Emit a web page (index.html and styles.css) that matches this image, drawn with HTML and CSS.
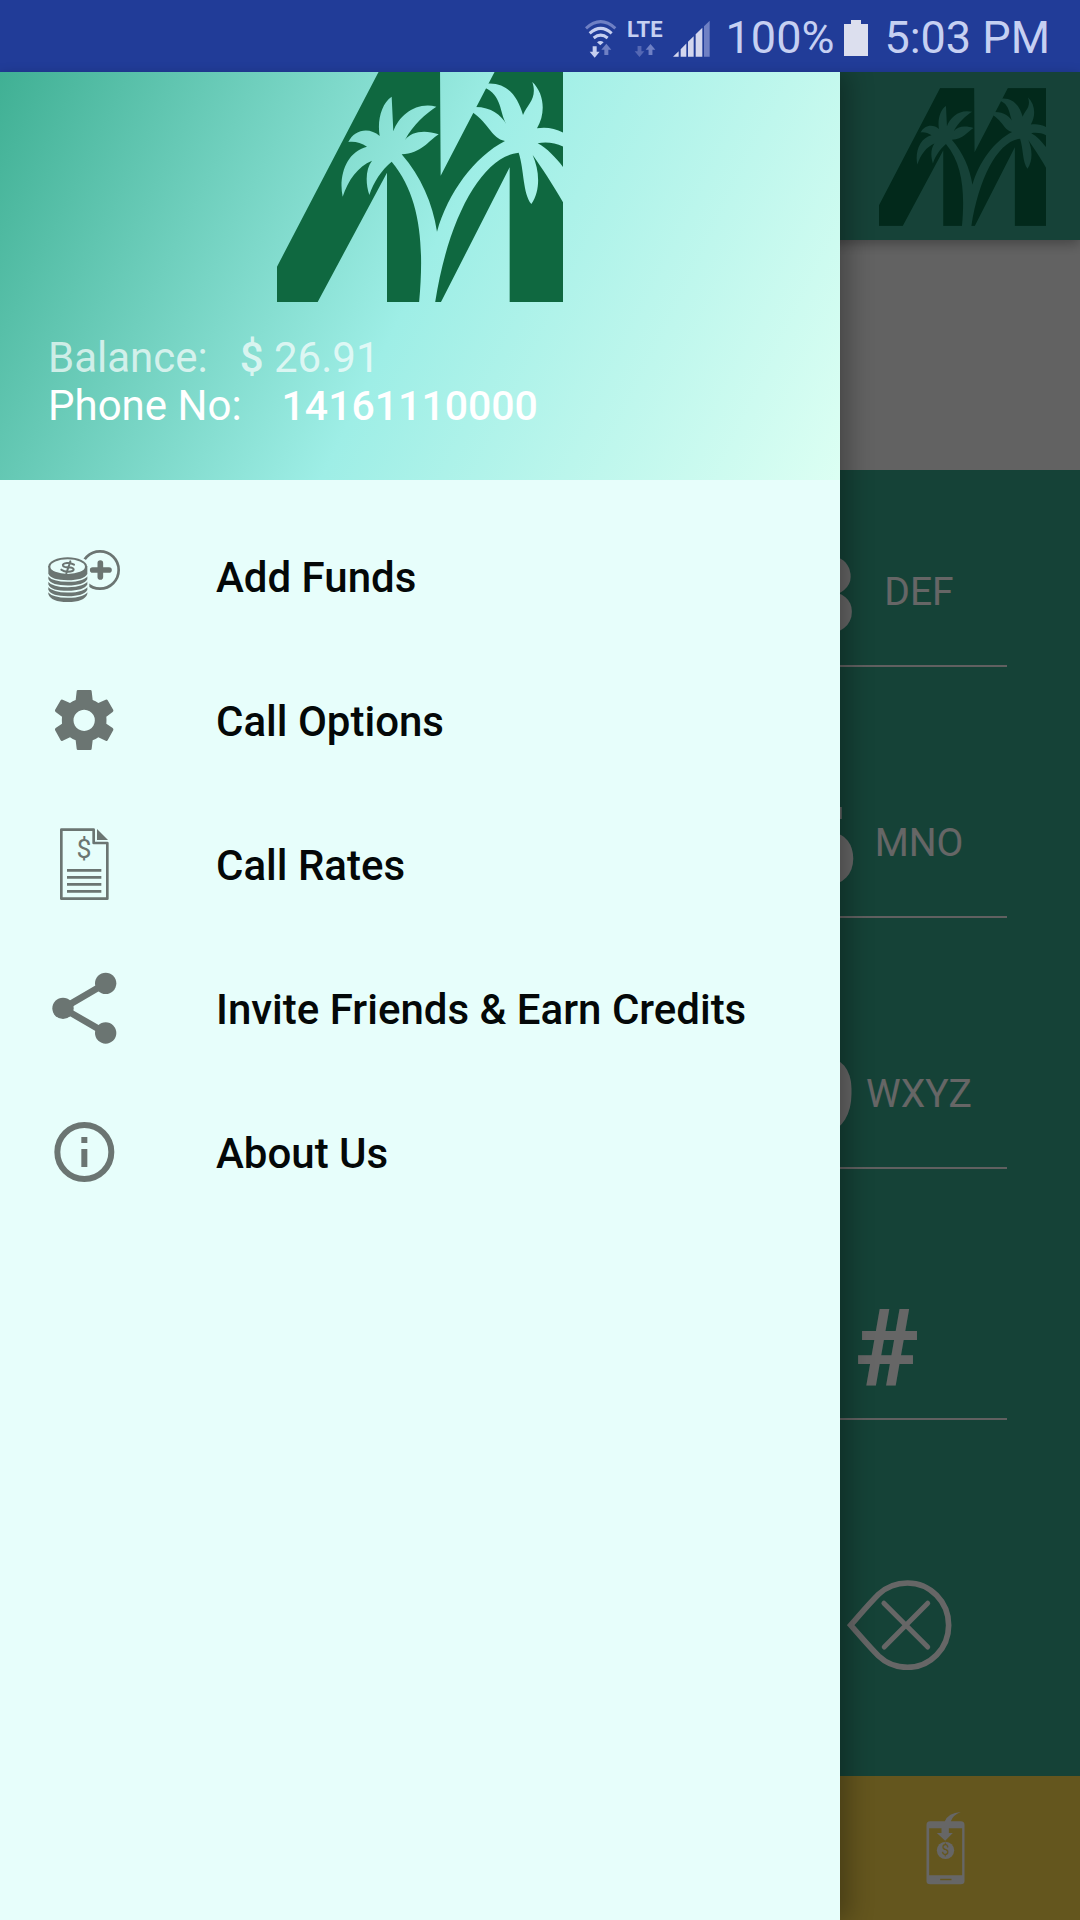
FILE: index.html
```html
<!DOCTYPE html>
<html lang="en">
<head>
<meta charset="utf-8">
<meta name="viewport" content="width=device-width, initial-scale=1">
<title>Dialer</title>
<link rel="stylesheet" href="styles.css">
</head>
<body>
<svg class="defs" aria-hidden="true">
  <defs>
    <mask id="palms" maskUnits="userSpaceOnUse" x="48" y="18" width="858" height="708">
      <rect x="48" y="18" width="858" height="708" fill="#fff"/>
      <path fill="#000" d="M474,730 C490,560 480,410 392,305 C362,330 338,365 325,405 C312,365 315,325 333,302 C290,320 262,360 245,410 C232,350 255,275 318,260 C300,248 280,243 262,246 C280,208 325,200 356,228 C348,180 362,130 392,110 L397,214 C415,165 465,125 526,140 C495,160 455,195 432,240 C450,215 490,208 533,223 C505,240 480,282 422,283 C480,350 515,430 528,515 C560,400 640,290 732,243 C690,235 690,195 630,154 L640,141 C690,140 720,165 736,192 C715,160 725,105 668,82 L680,71 C740,68 770,110 786,165 C800,130 830,115 814,66 C850,100 855,160 828,205 C855,200 885,205 910,220 L910,262 C885,248 855,245 830,250 C860,265 890,300 910,326 L910,434 C880,380 840,320 815,285 C835,330 840,390 811,432 C785,400 790,330 773,278 C660,290 560,480 522,730 Z"/>
    </mask>
    <symbol id="logo" viewBox="48 18 858 708">
      <path mask="url(#palms)" d="M362,18 H537 L539,347 L710,18 H906 V726 H746 V322 L540,726 H378 V338 L170,726 H48 V620 Z"/>
    </symbol>
  </defs>
</svg>

<header class="status">
  <svg class="status-wifi" viewBox="72 48 96 117" aria-label="Wi-Fi">
    <g fill="none" stroke="#c6cff0" stroke-width="9">
      <path stroke="#6f80c4" d="M75,76 Q119,36 163,76"/>
      <path d="M86,91 Q119,61 152,91"/>
      <path d="M98,105 Q119,88 140,105"/>
    </g>
    <path fill="#c6cff0" d="M108,118 Q118,110 128,118 L118,127 Z M95,130 h12 v16 h9 l-15,18 l-15,-18 h9 Z"/>
    <path fill="#6f80c4" d="M130,156 h12 v-16 h9 l-15,-18 l-15,18 h9 Z"/>
  </svg>
  <div class="status-lte">
    <span>LTE</span>
    <svg viewBox="226 122 68 40" aria-hidden="true">
      <path fill="#5568b4" d="M237,128 h12 v16 h9 l-15,18 l-15,-18 h9 Z"/>
      <path fill="#6f80c4" d="M271,156 h12 v-16 h9 l-15,-18 l-15,18 h9 Z"/>
    </svg>
  </div>
  <svg class="status-signal" viewBox="345 52 111 110" aria-label="Signal">
    <path fill="#d3d6ee" d="M345,162 L362,145 V162 Z M368,139 L385,122 V162 H368 Z M390,117 L407,100 V162 H390 Z M413,94 L433,75 V162 H413 Z"/>
    <path fill="#6f80c4" d="M438,70 L455,54 V162 H438 Z"/>
  </svg>
  <span class="status-text">100%</span>
  <svg class="status-battery" viewBox="0 0 24 36" aria-label="Battery full"><path fill="#dcdfee" d="M7,0 h10 v4 h7 v32 h-24 v-32 h7 Z"/></svg>
  <span class="status-text">5:03 PM</span>
</header>

<div class="app">
  <main class="dialer">
    <div class="toolbar"><svg class="toolbar-logo" role="img" aria-label="Logo"><use href="#logo"/></svg></div>
    <div class="display"></div>
    <ul class="keypad">
      <li><button class="key"><span class="digit">3</span><span class="letters">DEF</span></button></li>
      <li><button class="key"><span class="digit">6</span><span class="letters">MNO</span></button></li>
      <li><button class="key"><span class="digit">9</span><span class="letters">WXYZ</span></button></li>
      <li><button class="key key-hash"><span class="digit">#</span></button></li>
      <li class="erase">
        <button class="key" aria-label="Backspace">
          <svg viewBox="84 121 314 271" fill="none" stroke="#fff">
            <path stroke-width="17" d="M94,257 C130,216 150,192 178,164 Q214,130 265,130 A124,127 0 0 1 265,384 Q214,384 178,350 C150,322 130,298 94,257 Z"/>
            <path stroke-width="15" stroke-linecap="round" d="M194,191 L326,323 M326,191 L195,323"/>
          </svg>
        </button>
      </li>
    </ul>
    <nav class="tabs">
      <button class="tab" aria-label="Top up">
        <svg viewBox="316 812 116 222">
          <path fill="#fff" fill-rule="evenodd" d="M328,843 H372 Q382,818 420,815 Q396,824 390,843 H420 Q431,843 431,854 V1022 Q431,1032 420,1032 H328 Q317,1032 317,1022 V854 Q317,843 328,843 Z M325,864 V1005 H424 V864 H384 V878 H396 L373,901 L348,878 H362 V864 Z M358,1015 V1020 H392 V1015 Z"/>
          <circle cx="374" cy="930" r="26" fill="#fff"/>
          <text class="coin-sign" x="374" y="945" text-anchor="middle">$</text>
        </svg>
      </button>
    </nav>
  </main>

  <div class="scrim"></div>

  <aside class="drawer">
    <div class="account">
      <svg class="account-logo" role="img" aria-label="Logo"><use href="#logo"/></svg>
      <dl class="facts">
        <div class="fact fact-balance"><dt>Balance:</dt><dd><b>$</b> 26.91</dd></div>
        <div class="fact"><dt>Phone No:</dt><dd class="phone">14161110000</dd></div>
      </dl>
    </div>
    <nav class="menu">
      <a class="item" href="#funds">
        <svg class="item-icon" viewBox="83 30 216 216">
          <circle cx="239" cy="120" r="56" fill="none" stroke="#6b7572" stroke-width="8"/>
          <path stroke="#6b7572" stroke-width="17" stroke-linecap="round" d="M217,120 H266 M240,99 V141"/>
          <path fill="#e7fefb" d="M78,106 Q85,78 142,76 Q200,78 207,106 V200 Q190,222 142,222 Q90,222 78,200 Z"/>
          <path fill="#6b7572" d="M84,108 V192 Q92,216 142,216 Q192,216 201,192 V108 Z"/>
          <ellipse cx="142" cy="109" rx="58" ry="27" fill="#6b7572"/>
          <ellipse cx="142" cy="110" rx="52" ry="22" fill="#e7fefb"/>
          <g fill="none" stroke="#e7fefb" stroke-width="5">
            <path d="M82,133 Q92,153 142,153 Q192,153 203,133"/>
            <path d="M82,149 Q92,169 142,169 Q192,169 203,149"/>
            <path d="M82,165 Q92,185 142,185 Q192,185 203,165"/>
            <path d="M82,181 Q92,201 142,201 Q192,201 203,181"/>
          </g>
          <path fill="none" stroke="#6b7572" stroke-width="6" stroke-linecap="round" d="M161,104 Q152,98 140,99 Q125,101 128,107 Q131,112 144,112 Q160,113 160,119 Q158,125 144,125 Q130,125 123,119 M150,94 L138,130"/>
        </svg>
        <span>Add Funds</span>
      </a>
      <a class="item" href="#options">
        <svg class="item-icon" viewBox="83 462 216 216">
          <path fill="#6b7572" fill-rule="evenodd" d="M173,480 H210 Q214,480 214,484 L217,510 Q226,513 234,519 L256,509 Q260,507 262,511 L279,540 Q280,543 277,546 L258,560 Q259,570 258,581 L277,594 Q280,597 279,600 L262,631 Q260,634 256,632 L234,622 Q226,628 217,631 L214,656 Q214,660 210,660 H173 Q169,660 169,656 L166,631 Q157,628 149,622 L127,632 Q123,634 121,631 L104,600 Q103,597 106,594 L125,581 Q124,570 125,560 L106,546 Q103,543 104,540 L121,511 Q123,507 127,509 L149,519 Q157,513 166,510 L169,484 Q169,480 173,480 Z M191,539 a32,32 0 1 0 1,0 Z"/>
        </svg>
        <span>Call Options</span>
      </a>
      <a class="item" href="#rates">
        <svg class="item-icon" viewBox="83 84 216 216">
          <path fill="none" stroke="#6b7572" stroke-width="8" stroke-linejoin="round" d="M220,89 H123 V296 H261 V129 H220 Z"/>
          <path fill="#6b7572" d="M230,87 L263,120 H230 Z"/>
          <path stroke="#6b7572" stroke-width="8" d="M140,211 H243 M140,232 H243 M140,253 H243 M140,274 H243"/>
          <text class="icon-sign" x="191" y="174" text-anchor="middle">$</text>
        </svg>
        <span>Call Rates</span>
      </a>
      <a class="item" href="#invite">
        <svg class="item-icon" viewBox="83 516 216 216">
          <path fill="none" stroke="#6b7572" stroke-width="20" d="M256,550 L128,625 L256,699"/>
          <g fill="#6b7572"><circle cx="256" cy="550" r="32"/><circle cx="128" cy="625" r="32"/><circle cx="256" cy="699" r="32"/></g>
        </svg>
        <span>Invite Friends &amp; Earn Credits</span>
      </a>
      <a class="item" href="#about">
        <svg class="item-icon" viewBox="83 948 216 216">
          <circle cx="192" cy="1056" r="81" fill="none" stroke="#6b7572" stroke-width="18"/>
          <path fill="#6b7572" d="M183,1011 h18 v18 h-18 Z M183,1047 h18 v54 h-18 Z"/>
        </svg>
        <span>About Us</span>
      </a>
    </nav>
  </aside>
</div>
</body>
</html>
```
FILE: styles.css
```css
* {
  box-sizing: border-box;
}

body {
  display: flex;
  flex-direction: column;
  min-height: 100vh;
  margin: 0;
  font-family: Roboto, sans-serif;
  background: #35a58a;
}

svg {
  display: block;
}

button {
  padding: 0;
  border: 0;
  background: none;
  color: inherit;
  font: inherit;
}

.defs {
  position: absolute;
  width: 0;
  height: 0;
}

/* Status bar */
.status {
  display: flex;
  align-items: center;
  justify-content: flex-end;
  gap: 10px;
  height: 72px;
  padding: 4px 30px 0 0;
  background: #213c98;
  color: #c6d0f2;
}

.status-wifi {
  width: 32px;
  height: 39px;
}

.status-lte {
  display: flex;
  flex-direction: column;
  align-items: center;
  gap: 3px;
  font-size: 22px;
  font-weight: 700;
  line-height: 22px;
}

.status-lte svg {
  width: 22px;
  height: 13px;
}

.status-signal {
  width: 37px;
  height: 37px;
}

.status-text {
  margin-left: 6px;
  font-size: 45px;
  line-height: 68px;
}

.status-battery {
  width: 24px;
  height: 36px;
}

/* Dialer behind the drawer */
.app {
  position: relative;
  display: flex;
  flex: 1;
}

.dialer {
  display: flex;
  flex: 1;
  flex-direction: column;
  color: #fff;
}

.toolbar {
  display: flex;
  justify-content: flex-end;
  height: 168px;
  padding: 16px 34px;
  background: #37a68c;
  box-shadow: 0 4px 12px rgba(0, 0, 0, 0.3);
  z-index: 1;
}

.toolbar-logo {
  width: 167px;
  height: 138px;
  fill: #056744;
}

.display {
  height: 230px;
  background: #f6f6f6;
}

.keypad {
  display: grid;
  flex: 1;
  grid-template-rows: 197px repeat(3, 251px) 1fr;
  margin: 0;
  padding: 0 73px;
  list-style: none;
  background: #35a58a;
}

.keypad li {
  display: flex;
  align-items: flex-end;
  justify-content: flex-end;
  border-bottom: 2px solid #f0f0f0;
}

.key {
  display: flex;
  align-items: center;
  justify-content: flex-end;
  height: 148px;
  padding-right: 26px;
}

.key-hash {
  padding-right: 88px;
}

.digit {
  padding-top: 9px;
  font-size: 108px;
  font-weight: 700;
  line-height: 120px;
}

.letters {
  width: 124px;
  padding-top: 2px;
  font-size: 39px;
  text-align: center;
}

.keypad .erase {
  align-items: center;
  padding: 54px 29px 0 0;
  border: 0;
}

.erase svg {
  width: 105px;
  height: 90px;
}

.tabs {
  display: grid;
  grid-template-columns: repeat(4, 1fr);
  height: 144px;
  background: #fad74b;
}

.tab {
  display: grid;
  grid-column: 4;
  place-items: center;
}

.tab svg {
  width: 39px;
  height: 74px;
}

.coin-sign {
  fill: #fad74b;
  font-size: 42px;
}

.scrim {
  position: absolute;
  inset: 0;
  z-index: 2;
  background: rgba(0, 0, 0, 0.6);
}

/* Navigation drawer */
.drawer {
  position: absolute;
  z-index: 3;
  top: 0;
  bottom: 0;
  left: 0;
  width: min(840px, 80%);
  background: #e7fefb;
  box-shadow: 8px 0 24px rgba(0, 0, 0, 0.3);
  clip-path: inset(0 -48px 0 0);
}

.account {
  display: flex;
  flex-direction: column;
  height: 408px;
  overflow: hidden;
  background: linear-gradient(116deg, #40b094, #9eeee6 50%, #dcfff3);
}

.account-logo {
  flex: none;
  align-self: center;
  width: 286px;
  height: 236px;
  margin-top: -6px;
  fill: #0f6840;
}

.facts {
  margin: 32px 48px;
  color: #fff;
  font-size: 42px;
  line-height: 48px;
}

.fact {
  display: flex;
  gap: 40px;
}

.fact-balance {
  gap: 32px;
  color: rgba(255, 255, 255, 0.7);
}

.fact b {
  font-weight: 500;
}

.fact dd {
  margin: 0;
}

.phone {
  font-size: 41px;
  font-weight: 500;
}

.menu {
  padding-top: 24px;
}

.item {
  display: flex;
  align-items: center;
  gap: 96px;
  height: 144px;
  padding: 0 48px;
  color: #040808;
  font-size: 42px;
  font-weight: 500;
  text-decoration: none;
}

.item span {
  padding-top: 3px;
}

.item-icon {
  width: 72px;
  height: 72px;
}

.icon-sign {
  fill: #6b7572;
  font-size: 80px;
  font-weight: 400;
}
```
